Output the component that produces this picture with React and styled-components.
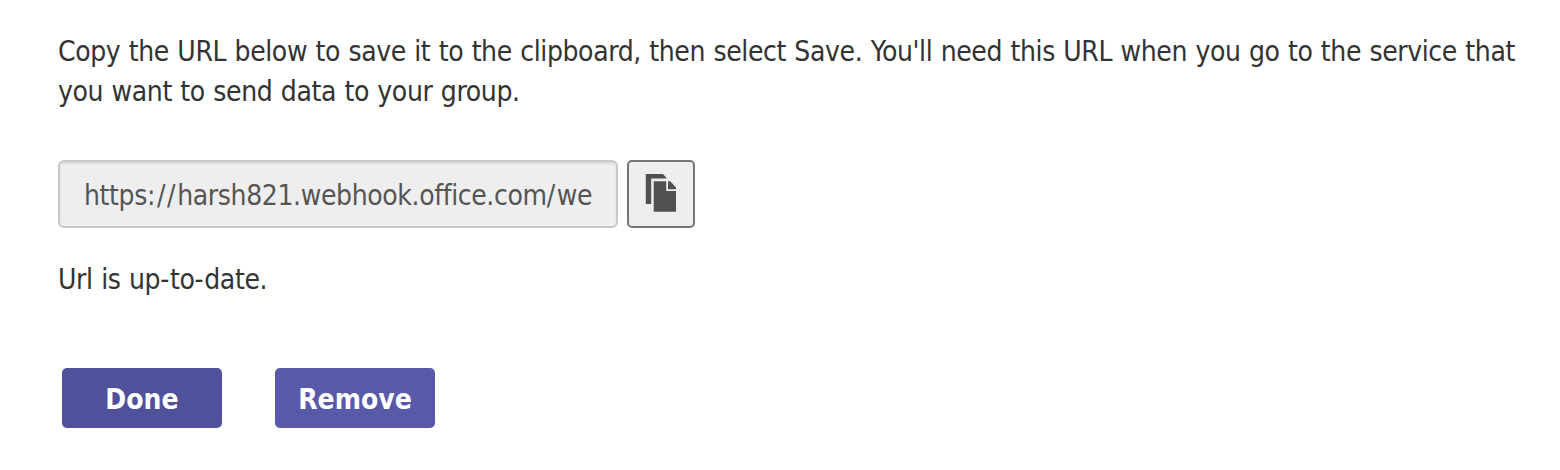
import React from 'react';
import styled, { createGlobalStyle } from 'styled-components';

const Global = createGlobalStyle`
  * { box-sizing: border-box; }
  body { margin: 0; background: #fff; color: #333; font-family: "DejaVu Sans Condensed", "DejaVu Sans", sans-serif; font-stretch: condensed; }
`;
const Page = styled.main`
  padding: 32px 0 0 58px;
  height: 470px;
  font-size: 28px;
  line-height: 40px;
`;
const Line = styled.span`
  display: block;
  width: max-content;
  white-space: nowrap;
  letter-spacing: ${p => p.$track || 0}px;
  word-spacing: 0.8px;
`;
const Wide = styled.span`
  letter-spacing: ${p => p.$track}px;
`;
const Intro = styled.p`margin: 0;`;
const UrlRow = styled.div`
  display: flex;
  gap: 9px;
  margin-top: 48px;
`;
const UrlField = styled.div`
  width: 560px;
  height: 68px;
  padding: 16px 24px 12px;
  line-height: 36px;
  border: 2px solid #c8c8c8;
  border-radius: 6px;
  background: #eee;
  box-shadow: inset 0 2px 2px rgba(0,0,0,.08);
  color: #555;
`;
const CopyButton = styled.button`
  width: 68px;
  height: 68px;
  padding: 0;
  display: flex;
  align-items: center;
  justify-content: center;
  border: 2px solid #767676;
  border-radius: 5px;
  background: #eee;
`;
const Status = styled.p`margin: 32px 0 0;`;
const Actions = styled.div`
  display: flex;
  gap: 53px;
  margin: 68px 0 0 4px;
`;
const Action = styled.button`
  width: 160px;
  height: 60px;
  padding: 4px 0 0;
  display: flex;
  align-items: center;
  justify-content: center;
  border: 0;
  border-radius: 5px;
  background: ${p => p.$bg};
  color: #fff;
  font-family: inherit;
  font-stretch: condensed;
  font-weight: 700;
  font-size: 28px;
  line-height: 40px;
`;

export default function App() {
  return (
    <Page>
      <Global />
      <Intro>
        <Line $track={-0.39}>Copy the URL below to save it to the clipboard, then select Save. You'll need this URL when you go to the service that</Line>
        <Line $track={-0.38}>you want to send data to your group.</Line>
      </Intro>
      <UrlRow>
        <UrlField><Line $track={-0.38}>https<Wide $track={1.6}>://</Wide>harsh821.webhook.office.com<Wide $track={1.6}>/</Wide>we</Line></UrlField>
        <CopyButton aria-label="Copy">
          <svg width="34" height="40" viewBox="0 0 34 40" fill="#505050">
            <path d="M1.8 0h17.2l4 4.6H7.2V30H1.8z" />
            <path d="M9.7 7.3h12.5V17h9.8v20.7H9.7z" />
            <path d="M24 7.3h2.3l5.7 6.2v1.8h-8z" />
          </svg>
        </CopyButton>
      </UrlRow>
      <Status><Line $track={-0.36}>Url is up<Wide $track={0.6}>-</Wide>to<Wide $track={0.6}>-</Wide>date.</Line></Status>
      <Actions>
        <Action $bg="#4f529b"><Line>Done</Line></Action>
        <Action $bg="#5859a9"><Line>Remove</Line></Action>
      </Actions>
    </Page>
  );
}
